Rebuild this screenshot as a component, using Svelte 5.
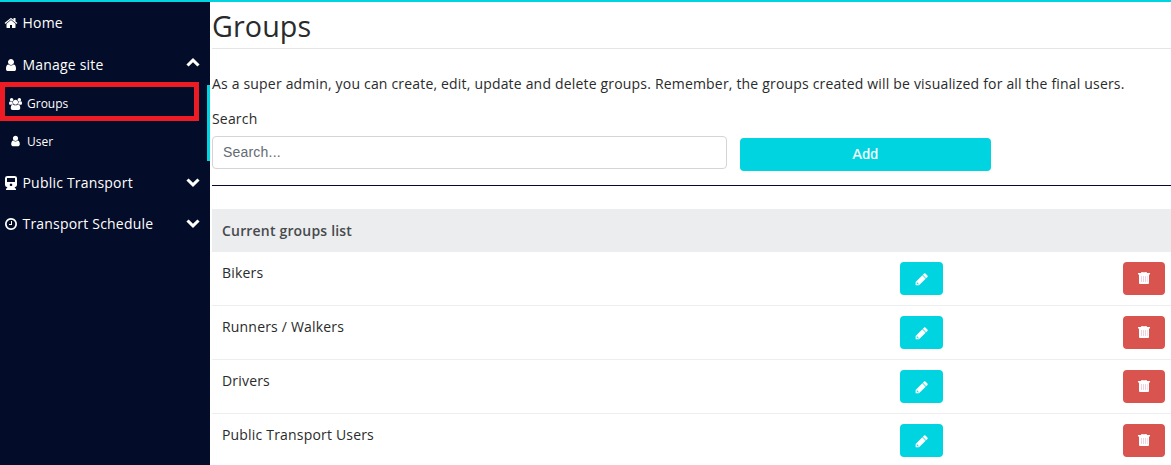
<script>
  const groups = ['Bikers', 'Runners / Walkers', 'Drivers', 'Public Transport Users'];
</script>

{#snippet userIcon()}
  <svg viewBox="0 0 1792 1792"><path d="M1536 1399q0 109-62.5 187t-150.5 78h-854q-88 0-150.5-78t-62.5-187q0-85 8.5-160.5t31.5-152 58.5-131 94-89 134.5-34.5q131 128 313 128t313-128q76 0 134.5 34.5t94 89 58.5 131 31.5 152 8.5 160.5zm-256-887q0 159-112.5 271.5t-271.5 112.5-271.5-112.5-112.5-271.5 112.5-271.5 271.5-112.5 271.5 112.5 112.5 271.5z" /></svg>
{/snippet}

{#snippet chevron(up)}
  <svg class="chevron" class:up viewBox="0 0 14 9"><path d="M0.4 2.6 2.6 0.4 7 4.7 11.4 0.4 13.6 2.6 7 9z" /></svg>
{/snippet}

<div class="app">
  <nav>
    <div class="item home">
      <svg viewBox="0 0 1792 1792"><path d="M1472 992v480q0 26-19 45t-45 19h-384v-384h-256v384h-384q-26 0-45-19t-19-45v-480q0-1 .5-3t.5-3l575-474 575 474q1 2 1 6zm223-69l-62 74q-8 9-21 11h-3q-13 0-21-7l-692-577-692 577q-12 8-24 7-13-2-21-11l-62-74q-8-10-7-23.5t11-21.5l719-599q32-26 76-26t76 26l244 204v-195q0-14 9-23t23-9h192q14 0 23 9t9 23v408l219 182q10 8 11 21.5t-7 23.5z" /></svg>
      <span>Home</span>
    </div>
    <div class="item">{@render userIcon()}<span>Manage site</span>{@render chevron(true)}</div>
    <div class="submenu">
      <div class="sub selected">
        <svg viewBox="0 0 1920 1792"><path d="M593 896q-162 5-265 128h-134q-82 0-138-40.5t-56-118.5q0-353 124-353 6 0 43.5 21t97.5 42.5 119 21.5q67 0 133-23-5 37-5 66 0 159 93 293zm1071 637q0 120-73 189.5t-194 69.5h-874q-121 0-194-69.5t-73-189.5q0-53 3.5-103.5t14-109 26.5-108.5 43-97.5 62-81 85.5-53.5 111.5-20q10 0 43 21.5t73 48 107 48 135 21.5 135-21.5 107-48 73-48 43-21.5q61 0 111.5 20t85.500 53.500 62 81 43 97.500 26.500 108.500 14 109 3.500 103.500zm-1024-1277q0 106-75 181t-181 75-181-75-75-181 75-181 181-75 181 75 75 181zm704 384q0 159-112.500 271.500t-271.500 112.500-271.500-112.500-112.500-271.500 112.500-271.500 271.500-112.500 271.500 112.500 112.500 271.500zm576 225q0 78-56 118.500t-138 40.500h-134q-103-123-265-128 93-134 93-293 0-29-5-66 66 23 133 23 59 0 119-21.500t97.500-42.500 43.500-21q124 0 124 353zm-128-609q0 106-75 181t-181 75-181-75-75-181 75-181 181-75 181 75 75 181z" /></svg>
        <span>Groups</span>
      </div>
      <div class="sub">{@render userIcon()}<span>User</span></div>
    </div>
    <div class="item lower">
      <svg viewBox="0 0 14 14"><path fill-rule="evenodd" d="M3.500 0h7Q13 0 13 2v7Q13 11 10.500 11.300L12 13V14H2v-1L3.500 11.300Q1 11 1 9V2Q1 0 3.500 0zM3 2v4h8V2zM7 7.500a1.300 1.300 0 1 0 .01 0z" /></svg>
      <span>Public Transport</span>{@render chevron(false)}
    </div>
    <div class="item lower">
      <svg viewBox="0 0 1792 1792"><path d="M1024 544v448q0 14-9 23t-23 9h-320q-14 0-23-9t-9-23v-64q0-14 9-23t23-9h224v-352q0-14 9-23t23-9h64q14 0 23 9t9 23zm416 352q0-148-73-273t-198-198-273-73-273 73-198 198-73 273 73 273 198 198 273 73 273-73 198-198 73-273zm224 0q0 209-103 385.5t-279.5 279.5-385.5 103-385.5-103-279.5-279.5-103-385.5 103-385.5 279.5-279.5 385.5-103 385.5 103 279.5 279.5 103 385.5z" /></svg>
      <span>Transport Schedule</span>{@render chevron(false)}
    </div>
  </nav>
  <main>
    <h1>Groups</h1>
    <p>As a super admin, you can create, edit, update and delete groups. Remember, the groups created will be visualized for all the final users.</p>
    <label for="search">Search</label>
    <div class="tools">
      <input id="search" placeholder="Search..." />
      <button class="add">Add</button>
    </div>
    <section>
      <header>Current groups list</header>
      {#each groups as group}
        <div class="row">
          <span>{group}</span>
          <button class="edit" aria-label="Edit">
            <svg viewBox="0 0 14 14"><path fill-rule="evenodd" d="M.7 9.700 7.900 2.500l3.600 3.600-7.200 7.200H.7zM8.400 2 9.800.6q.7-.6 1.400 0l2.200 2.200q.6.700 0 1.400L12 5.600zM1.900 10.500v1h1v1h.8l.5-.5-1.800-2z" /></svg>
          </button>
          <button class="delete" aria-label="Delete">
            <svg viewBox="0 0 12 12"><path fill-rule="evenodd" d="M0 1h3L3.500 0h5L9 1h3v1.500h-1V11q0 1-1 1H2q-1 0-1-1V2.500H0zM4.500 1h3V.7h-3z" /><path class="slots" d="M3 4h1v6H3zm2 0h1v6H5zm2 0h1v6H7zm2 0h.6v6H9z" /></svg>
          </button>
        </div>
      {/each}
    </section>
  </main>
</div>

<style>
  :global(body) { overflow: hidden; }
  .app {
    box-sizing: border-box;
    display: flex;
    height: 465px;
    overflow: hidden;
    border-top: 2px solid #00d4e1;
    background: #fff;
    color: #292b2c;
    font: 14px/21px "Open Sans", sans-serif;
    letter-spacing: .183px;
  }
  svg { display: block; fill: currentColor; }
  nav { flex: 0 0 210px; background: #030c28; color: #fff; letter-spacing: .2px; }
  .item { box-sizing: border-box; display: flex; align-items: center; height: 41px; padding: 0 10px 0 4px; }
  .home { height: 42px; padding-bottom: 1px; }
  .lower { padding-top: 2px; }
  .item > svg:first-child { width: 14px; height: 14px; margin-right: 4.5px; }
  .item .chevron { width: 14px; height: 9px; margin-left: auto; }
  .item .up { transform: rotate(180deg) translateY(2px); }
  .submenu { display: flex; flex-direction: column; box-sizing: border-box; border-right: 3px solid #00d4e1; height: 76px; }
  .sub { box-sizing: border-box; display: flex; flex: none; align-items: center; height: 38px; padding-left: 9px; font-size: 12px; letter-spacing: 0; }
  .sub svg { width: 13px; height: 12px; margin-right: 5px; }
  .selected { width: 199px; height: 39px; margin-top: -3px; margin-bottom: 2px; padding: 4px 0 0 4px; border: 5px solid #ed1c24; }
  .selected + .sub { padding-bottom: 2px; }
  main { flex: 1; min-width: 0; padding-left: 2px; }
  h1 { margin: 0 0 24px; height: 46px; border-bottom: 1px solid #e5e5e5; font-size: 28.7px; font-weight: 400; line-height: 48px; letter-spacing: .1px; }
  p { margin: 0 0 14px; white-space: nowrap; }
  label { display: block; }
  .tools { display: flex; align-items: flex-start; box-sizing: border-box; height: 57px; padding-top: 7px; border-bottom: 1px solid #030c28; }
  input { box-sizing: border-box; width: 515px; height: 33px; padding: 0 10px 1px; border: 1px solid #d5d5d6; border-radius: 4px; font: 14px "Liberation Sans", sans-serif; letter-spacing: .2px; }
  input::placeholder { color: #636c72; opacity: 1; }
  button { display: flex; align-items: center; justify-content: center; height: 33px; padding: 0; border: 0; border-radius: 4px; color: #fff; font: 14px "Liberation Sans", sans-serif; }
  .add { width: 251px; margin: 2px 0 0 13px; padding-bottom: 1px; background: #00d4e1; letter-spacing: .4px; -webkit-text-stroke: .2px currentColor; }
  section { margin-top: 23px; }
  header { height: 43px; padding-left: 10px; background: #ecedef; color: #464a4c; font-weight: 600; line-height: 43px; }
  .row { box-sizing: border-box; display: flex; height: 54px; padding: 10px 6px 0 10px; border-bottom: 1px solid #eceeef; }
  .row > span { width: 678px; }
  .edit { width: 43px; background: #00d4e1; }
  .delete { width: 42px; margin-left: auto; background: #d9534f; }
  .edit svg { width: 13px; height: 13px; margin-top: 2px; }
  .delete svg { width: 12px; height: 12px; margin-bottom: 1px; }
  .slots { fill: #efd0df; }
</style>
